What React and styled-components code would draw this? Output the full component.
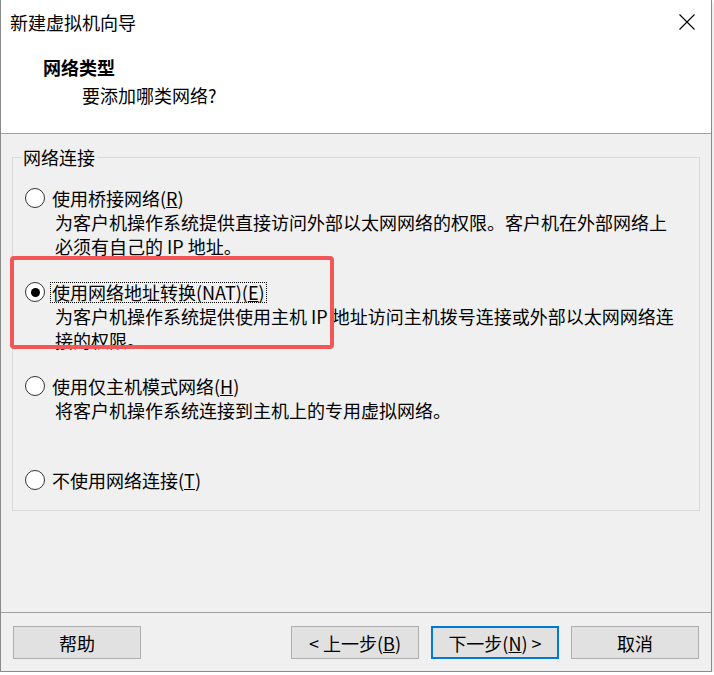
import React from 'react';
import styled, { createGlobalStyle } from 'styled-components';

const GlobalStyle = createGlobalStyle`
  html, body { margin: 0; padding: 0; background: #ffffff; }
  body { font-family: "Noto Sans CJK SC", "Microsoft YaHei", sans-serif; color: #000; }
  * { box-sizing: border-box; }
`;

const Window = styled.div`
  position: relative;
  width: 712px;
  height: 672px;
  display: flex;
  flex-direction: column;
  border: 1px solid #8a8a8a;
  border-top: none;
  background: #f0f0f0;
  box-shadow: 1px 2px 4px rgba(0, 0, 0, 0.12);
`;

const Header = styled.header`
  height: 134px;
  flex: none;
  background: #ffffff;
  border-bottom: 1px solid #a0a0a0;
  display: flex;
  flex-direction: column;
`;

const TitleBar = styled.div`
  height: 43px;
  display: flex;
  align-items: center;
  justify-content: space-between;
  padding: 0 16px 0 9px;
`;

const Title = styled.div`
  font-size: 18px;
  line-height: 24px;
`;

const CloseButton = styled.div`
  width: 16px;
  height: 16px;
  display: flex;
`;

const Heading = styled.div`
  margin-top: 12px;
  padding-left: 42px;
  font-size: 18px;
  font-weight: 700;
  line-height: 24px;
`;

const SubHeading = styled.div`
  margin-top: 4px;
  padding-left: 81px;
  font-size: 18px;
  line-height: 24px;
`;

const Body = styled.main`
  flex: 1;
  padding: 23px 11px 0;
`;

const GroupBox = styled.section`
  height: 354px;
  border: 1px solid #d9d9d9;
  padding: 0 0 0 12px;
  display: flex;
  flex-direction: column;
`;

const GroupTitle = styled.div`
  width: fit-content;
  margin: -11px 0 0 -4px;
  padding: 0 2px;
  background: #f0f0f0;
  font-size: 18px;
  line-height: 20px;
`;

const OptionList = styled.div`
  margin-top: 19px;
  display: flex;
  flex-direction: column;
`;

const Option = styled.div`
  height: 94px;
  display: flex;
  flex-direction: column;
  &:last-child { height: auto; }
`;

const RadioRow = styled.div`
  height: 24px;
  display: flex;
  align-items: center;
  gap: 5px;
`;

const Radio = styled.span`
  width: 20px;
  height: 20px;
  flex: none;
  border-radius: 50%;
  border: 1px solid #333333;
  background: #ffffff;
  display: flex;
  align-items: center;
  justify-content: center;
  &::after {
    content: "";
    width: 9px;
    height: 9px;
    border-radius: 50%;
    background: ${p => (p.$checked ? '#000000' : 'transparent')};
  }
`;

const OptionLabel = styled.span`
  font-size: 18px;
  line-height: 19px;
  padding: 0 1px;
  border: 1px dotted ${p => (p.$focused ? '#000000' : 'transparent')};
  white-space: nowrap;
`;

const Description = styled.div`
  margin-left: 30px;
  font-size: 18px;
  line-height: 24px;
  white-space: nowrap;
`;

const Line = styled.div``;

const Footer = styled.footer`
  height: 59px;
  flex: none;
  border-top: 1px solid #a0a0a0;
  padding: 13px 12px 0;
  display: flex;
  justify-content: space-between;
  align-items: flex-start;
`;

const ButtonGroup = styled.div`
  display: flex;
  gap: 12px;
`;

const Button = styled.button`
  width: 128px;
  height: 33px;
  padding: 0;
  margin: 0;
  font-family: "Noto Sans CJK SC", sans-serif;
  font-size: 18px;
  line-height: 20px;
  color: #000;
  background: #e1e1e1;
  border: ${p => (p.$default ? '2px solid #0078d7' : '1px solid #adadad')};
  display: flex;
  align-items: center;
  justify-content: center;
  white-space: pre;
`;

const Highlight = styled.div`
  position: absolute;
  left: 9px;
  top: 256px;
  width: 324px;
  height: 93px;
  border: 4px solid #f35656;
  border-radius: 4px;
  pointer-events: none;
`;

const options = [
  {
    label: <>使用桥接网络(<u>R</u>)</>,
    lines: ['为客户机操作系统提供直接访问外部以太网网络的权限。客户机在外部网络上', '必须有自己的 IP 地址。'],
  },
  {
    label: <>使用网络地址转换(NAT)(<u>E</u>)</>,
    lines: ['为客户机操作系统提供使用主机 IP 地址访问主机拨号连接或外部以太网网络连', '接的权限。'],
    checked: true,
  },
  {
    label: <>使用仅主机模式网络(<u>H</u>)</>,
    lines: ['将客户机操作系统连接到主机上的专用虚拟网络。'],
  },
  {
    label: <>不使用网络连接(<u>T</u>)</>,
    lines: [],
  },
];

export default function App() {
  return (
    <>
      <GlobalStyle />
      <Window>
        <Header>
          <TitleBar>
            <Title>新建虚拟机向导</Title>
            <CloseButton>
              <svg width="16" height="16" viewBox="0 0 16 16">
                <path d="M0.5 0.5 L15.5 15.5 M15.5 0.5 L0.5 15.5" stroke="#000" strokeWidth="1.1" fill="none" />
              </svg>
            </CloseButton>
          </TitleBar>
          <Heading>网络类型</Heading>
          <SubHeading>要添加哪类网络?</SubHeading>
        </Header>
        <Body>
          <GroupBox>
            <GroupTitle>网络连接</GroupTitle>
            <OptionList>
              {options.map((o, i) => (
                <Option key={i}>
                  <RadioRow>
                    <Radio $checked={o.checked} />
                    <OptionLabel $focused={o.checked}>{o.label}</OptionLabel>
                  </RadioRow>
                  {o.lines.length > 0 && (
                    <Description>
                      {o.lines.map((l, j) => (
                        <Line key={j}>{l}</Line>
                      ))}
                    </Description>
                  )}
                </Option>
              ))}
            </OptionList>
          </GroupBox>
        </Body>
        <Footer>
          <Button>帮助</Button>
          <ButtonGroup>
            <Button>{'< 上一步('}<u>B</u>)</Button>
            <Button $default>下一步(<u>N</u>){' >'}</Button>
            <Button>取消</Button>
          </ButtonGroup>
        </Footer>
        <Highlight />
      </Window>
    </>
  );
}
